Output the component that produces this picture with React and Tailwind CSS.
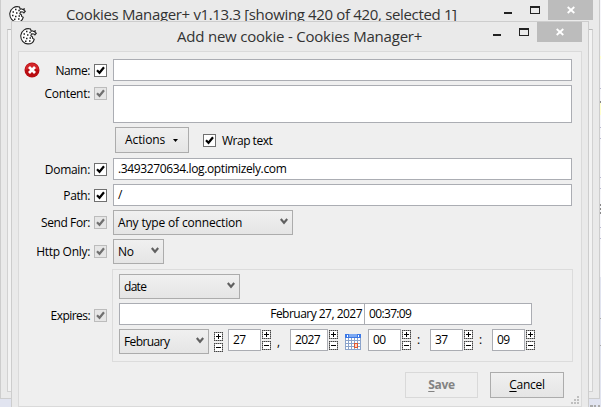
import React from 'react';

function Check({ muted = false, className = '' }) {
  return (
    <span
      className={
        'block h-[13px] w-[13px] shrink-0 border ' +
        (muted ? 'border-[#bcbcbc] bg-[#e6e6e6] text-[#707070] ' : 'border-[#707070] bg-white text-black ') +
        className
      }
    >
      <svg viewBox="0 0 11 11" className="block h-[11px] w-[11px]">
        <path d="M2 5.3 4.5 7.800 9 2.3" fill="none" stroke="currentColor" strokeWidth="2.200" />
      </svg>
    </span>
  );
}

function Row({ label, muted, icon, className, labelClass, checkClass, children }) {
  return (
    <div className={'flex items-start ' + className}>
      <div className={'flex w-[75px] shrink-0 justify-end whitespace-nowrap pr-[4px] leading-[16px] ' + labelClass}>
        {icon}
        <span>{label}</span>
      </div>
      <Check muted={muted} className={checkClass} />
      {children}
    </div>
  );
}

function Field({ className = '', children }) {
  return (
    <div className={'h-[22px] shrink-0 whitespace-nowrap border border-[#abadb3] bg-white pl-[4px] leading-[19px] ' + className}>
      {children}
    </div>
  );
}

function Select({ className = '', children }) {
  return (
    <div
      className={
        'flex h-[25px] shrink-0 items-center justify-between whitespace-nowrap border border-[#acacac] bg-linear-to-b from-[#f0f0f0] to-[#e5e5e5] pl-[4px] pr-[4px] ' +
        className
      }
    >
      <span>{children}</span>
      <svg viewBox="0 0 8 7" className="-mt-[2px] h-[7px] w-[8px]">
        <path d="M.8 1 4 4.8 7.2 1" fill="none" stroke="#606060" strokeWidth="2.1" />
      </svg>
    </div>
  );
}

function Spinner({ className = '' }) {
  return (
    <svg viewBox="0 0 9 20" shapeRendering="crispEdges" className={'h-[20px] w-[9px] shrink-0 ' + className}>
      <path d="M0 0H9V9H0ZM0 11H9V20H0Z" fill="#fff" />
      <path d="M.5.5H8.5V8.5H.5ZM.5 11.5H8.5V19.5H.5Z" fill="none" stroke="#999" />
      <path d="M0 .5H9M0 8.5H9M.5 0V9M8.500 0V9M0 11.5H9M0 19.5H9M.5 11V20M8.500 11V20" fill="none" stroke="#444" strokeDasharray="1 1" />
      <path d="M2 4.5H7M4.5 2V7M2 15.5H7" fill="none" stroke="#000" />
    </svg>
  );
}

function Cookie({ className = '' }) {
  return (
    <svg viewBox="0 0 17 17" className={'h-[17px] w-[17px] shrink-0 ' + className}>
      <path
        d="M10.500 1C6 -.4 1.300 2.600.8 7.300c-.4 4.700 3 8.500 7 8.600 3.300.1 5.700-1.700 6.400-4.600l-1.500-.8-.3-1.700-1.600-1 .8-2 2.400.2.9 1 1.400-1.800-1.300-.7.200-1.700-1.700.7-1-.7-1.300.4Z"
        fill="#fff"
        stroke="#222"
        strokeWidth="1.100"
      />
      <path
        d="M6 3.500h1.500M9.300 4.500h1.500M3.500 6H5M7 7h1.500M3 9.500h1.500M6 10.500h1.500M9.500 10H11M5 13.200h1.500M9 13h1.500"
        stroke="#222"
        strokeWidth="1.500"
      />
    </svg>
  );
}

function WindowButtons({ className = '' }) {
  return (
    <div className={'flex shrink-0 ' + className}>
      <svg viewBox="0 0 55 20" shapeRendering="crispEdges" className="h-[20px] w-[55px]">
        <path d="M11 12h8v2h-8z" fill="#222" />
        <path d="M37 6h10v8H37zM38 8v5h8V8z" fill="#222" fillRule="evenodd" />
      </svg>
      <div className="flex h-[20px] w-[45px] items-center justify-center bg-[#bcbcbc]">
        <svg viewBox="0 0 8 8" className="h-[8px] w-[8px]">
          <path d="M.7 1 7.300 7M7.300 1 .7 7" stroke="#fff" strokeWidth="1.800" />
        </svg>
      </div>
    </div>
  );
}

function ErrorIcon() {
  return (
    <svg viewBox="0 0 16 16" className="mr-auto -mt-px ml-[5px] h-[16px] w-[16px] shrink-0">
      <circle cx="8" cy="8" r="7.500" fill="#b90d12" />
      <path d="M1.200 8a6.800 6.800 0 0 1 13.600 0Q8 5 1.200 8" fill="#d3262a" />
      <path d="m5 5 6 6m0-6-6 6" stroke="#fff" strokeWidth="2.800" />
    </svg>
  );
}

function Calendar() {
  return (
    <svg viewBox="0 0 16 16" shapeRendering="crispEdges" className="ml-[7px] mt-[5px] h-[16px] w-[16px] shrink-0">
      <path d="M0 0h16v16H0z" fill="#8ba3cb" />
      <path d="M0 0h16v4H0z" fill="#3b78e7" />
      <path d="M4 0h8v3H4z" fill="#7da9f2" />
      <path d="M2 1h1v2H2zM13 1h1v2h-1z" fill="#fff" />
      <path
        d="M1 4h2v2H1zM4 4h2v2H4zM7 4h2v2H7zM10 4h2v2h-2zM13 4h2v2h-2zM1 7h2v2H1zM4 7h2v2H4zM7 7h2v2H7zM10 7h2v2h-2zM13 7h2v2h-2zM1 10h2v2H1zM4 10h2v2H4zM7 10h2v2H7zM13 10h2v2h-2zM1 13h2v2H1zM4 13h2v2H4zM7 13h2v2H7zM10 14h2v1h-2zM13 13h2v2h-2z"
        fill="#fff"
      />
      <path d="M9.500 9.500h3v4h-3z" fill="#fbd3c4" stroke="#e0572f" />
    </svg>
  );
}

function ManagerWindow() {
  return (
    <div className="absolute left-0 top-0 flex h-[399px] w-[600px] flex-col border-x border-b border-[#cdcdcd] bg-[#eaeaea] px-[6px] pb-[6px]">
      <div className="flex h-[29px] shrink-0 items-start">
        <Cookie className="ml-[2px] mt-[6px]" />
        <span className="ml-[40px] mt-[3px] grow whitespace-nowrap text-[15px] leading-[22px] tracking-[-0.34px] text-[#333]">
          Cookies Manager+ v1.13.3 [showing 420 of 420, selected 1]
        </span>
        <WindowButtons />
      </div>
      <div className="grow border border-[#d2d2d2] border-t-[#b8b8b8] bg-[#f3f3f3]" />
    </div>
  );
}

function Dialog() {
  return (
    <div className="absolute left-[11px] top-[21px] flex h-[390px] w-[578px] flex-col border border-[#cdcdcd] bg-[#eaeaea] px-[6px]">
      <div className="flex h-[29px] shrink-0 items-start">
        <Cookie className="ml-[2px] mt-[6px]" />
        <span className="ml-[140px] mt-[3px] grow whitespace-nowrap text-[15px] leading-[22px] tracking-[-0.21px] text-[#333]">
          Add new cookie - Cookies Manager+
        </span>
        <WindowButtons />
      </div>

      <div className="flex h-[356px] shrink-0 flex-col border border-[#dadada] bg-[#efefef] pt-[7px]">
        <Row label="Name:" icon={<ErrorIcon />} className="h-[26px]" labelClass="pt-[4px] tracking-[-0.45px]" checkClass="mt-[5px]">
          <Field className="ml-[6px] w-[459px]" />
        </Row>
        <Row label="Content:" muted className="h-[42px]" labelClass="pt-px" checkClass="mt-[2px]">
          <Field className="ml-[6px] h-[38px]! w-[459px]" />
        </Row>

        <div className="ml-[96px] flex h-[31px] items-start">
          <div className="flex h-[26px] w-[74px] items-center justify-between border border-[#acacac] bg-linear-to-b from-[#f0f0f0] to-[#e5e5e5] pl-[9px] pr-[10px]">
            <span className="tracking-[-0.1px]">Actions</span>
            <svg viewBox="0 0 5 3" className="h-[3px] w-[5px]">
              <path d="M0 0h5L2.500 3z" fill="#000" />
            </svg>
          </div>
          <Check className="ml-[14px] mt-[7px]" />
          <span className="ml-[6px] mt-[6px] leading-[16px] tracking-[-0.5px]">Wrap text</span>
        </div>

        <Row label="Domain:" className="h-[26px]" labelClass="pt-[4px]" checkClass="mt-[5px]">
          <Field className="ml-[6px] w-[459px] tracking-[-0.37px]">.3493270634.log.optimizely.com</Field>
        </Row>
        <Row label="Path:" className="h-[26px]" labelClass="pt-[4px] tracking-[-0.4px]" checkClass="mt-[5px]">
          <Field className="ml-[6px] w-[459px]">/</Field>
        </Row>
        <Row label="Send For:" muted className="h-[29px]" labelClass="pt-[5px] tracking-[-0.4px]" checkClass="mt-[6px]">
          <Select className="ml-[6px] w-[180px] tracking-[-0.17px]">Any type of connection</Select>
        </Row>
        <Row label="Http Only:" muted className="h-[30px]" labelClass="pt-[5px]" checkClass="mt-[6px]">
          <Select className="ml-[6px] w-[51px]">No</Select>
        </Row>
        <Row label="Expires:" muted className="h-[103px]" labelClass="pt-[39px] tracking-[-0.55px]" checkClass="mt-[40px]">
          <div className="ml-[5px] flex h-[93px] w-[461px] flex-col border border-[#dcdcdc] pl-[6px] pt-[4px]">
            <Select className="w-[121px] tracking-[-0.7px]">date</Select>
            <div className="mt-[4px] flex">
              <Field className="w-[246px] pr-[2px] text-right tracking-[-0.52px]">February 27, 2027</Field>
              <Field className="-ml-px w-[168px] tracking-[-0.65px]">00:37:09</Field>
            </div>
            <div className="mt-[4px] flex items-start">
              <Select className="w-[90px] tracking-[-0.6px]">February</Select>
              <Spinner className="ml-[5px] mt-[3px]" />
              <Field className="ml-[5px] w-[33px] tracking-[-0.6px]">27</Field>
              <Spinner className="ml-px mt-px" />
              <span className="w-[19px] pl-[6px] pt-[5px] leading-[16px]">,</span>
              <Field className="w-[38px] tracking-[-0.6px]">2027</Field>
              <Spinner className="ml-px mt-px" />
              <Calendar />
              <Field className="ml-[7px] w-[33px] tracking-[-0.6px]">00</Field>
              <Spinner className="ml-px mt-px" />
              <span className="w-[19px] pl-[6px] pt-[3px] leading-[16px]">:</span>
              <Field className="w-[33px] tracking-[-0.6px]">37</Field>
              <Spinner className="ml-px mt-px" />
              <span className="w-[19px] pl-[6px] pt-[3px] leading-[16px]">:</span>
              <Field className="w-[33px] tracking-[-0.6px]">09</Field>
              <Spinner className="ml-px mt-px" />
            </div>
          </div>
        </Row>

        <div className="flex items-start justify-end pr-[2px]">
          <div className="flex h-[26px] w-[73px] items-center justify-center border border-[#d9d9d9] bg-[#efefef] pb-px font-bold text-[#838383]">
            <span><u className="underline-offset-2">S</u>ave</span>
          </div>
          <div className="ml-[12px] flex h-[26px] w-[74px] items-center justify-center border border-[#acacac] bg-linear-to-b from-[#f0f0f0] to-[#e5e5e5] pb-px">
            <span><u className="underline-offset-2">C</u>ancel</span>
          </div>
          <svg viewBox="0 0 8 8" shapeRendering="crispEdges" className="ml-[7px] mt-[24px] h-[8px] w-[8px]">
            <path d="M6 0h2v2H6zM3 3h2v2H3zM6 3h2v2H6zM0 6h2v2H0zM3 6h2v2H3zM6 6h2v2H6z" fill="#bfbfbf" />
          </svg>
        </div>
      </div>
    </div>
  );
}

export default function App() {
  return (
    <div className="relative h-[407px] w-[601px] overflow-hidden bg-[#e1e4f0] font-['Open_Sans','Noto_Sans',sans-serif] text-[12px] tracking-[-0.3px] text-black">
      <svg viewBox="0 0 1 407" shapeRendering="crispEdges" className="absolute right-0 top-0 h-[407px] w-px">
        <path d="M0 0h1v407H0z" fill="#f6f6fa" />
        <path d="M0 56h1v3H0zM0 103h1v12H0z" fill="#ffffcc" />
        <path d="M0 88h1v1H0zM0 127h1v1H0zM0 138h1v1H0zM0 177h1v1H0zM0 188h1v1H0zM0 227h1v1H0zM0 238h1v1H0z" fill="#b9b9d0" />
        <path d="M0 101h1v2H0zM0 204h1v2H0zM0 208h1v2H0zM0 212h1v2H0z" fill="#888" />
        <path d="M0 277h1v130H0z" fill="#e1e4f0" />
        <path d="M0 318h1v1H0zM0 345h1v1H0z" fill="#aaa" />
      </svg>
      <ManagerWindow />
      <svg viewBox="0 0 12 2" shapeRendering="crispEdges" className="absolute left-[589px] top-[405px] h-[2px] w-[12px]">
        <path d="M1 0h3v2H1zM5 0h2v2H5zM9 0h2v2H9z" fill="#aaa" />
      </svg>
      <Dialog />
    </div>
  );
}
